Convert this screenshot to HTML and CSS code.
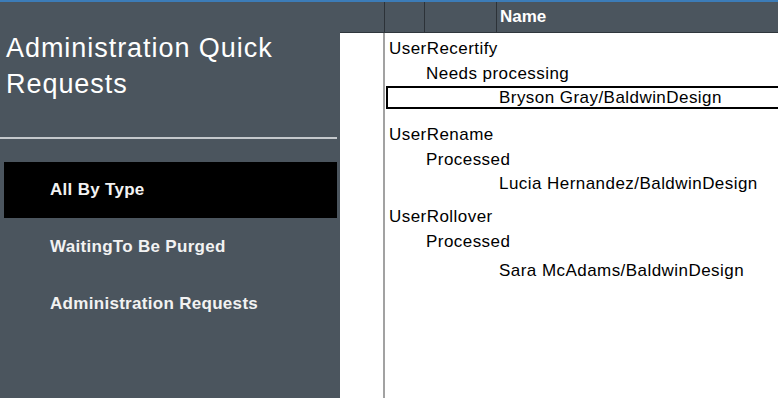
FILE: index.html
```html
<!DOCTYPE html>
<html lang="en">
<head>
<meta charset="utf-8">
<title>Administration Quick Requests</title>
<link rel="stylesheet" href="styles.css">
</head>
<body>
<div class="topbar"></div>
<div class="app">
  <aside class="sidebar">
    <h1 class="title">Administration Quick Requests</h1>
    <div class="divider"></div>
    <nav class="nav">
      <a class="nav-item active">All By Type</a>
      <a class="nav-item">WaitingTo Be Purged</a>
      <a class="nav-item">Administration Requests</a>
    </nav>
  </aside>
  <main class="main">
    <div class="header">
      <div class="hcell c1"></div>
      <div class="hcell c2"></div>
      <div class="hcell c3"></div>
      <div class="hcell name">Name</div>
    </div>
    <div class="body">
      <div class="gutter"></div>
      <div class="list">
        <div class="group g1">
          <div class="row l0">UserRecertify</div>
          <div class="row l1">Needs processing</div>
          <div class="row l2 selected">Bryson Gray/BaldwinDesign</div>
        </div>
        <div class="group g2">
          <div class="row l0">UserRename</div>
          <div class="row l1">Processed</div>
          <div class="row l2">Lucia Hernandez/BaldwinDesign</div>
        </div>
        <div class="group g3">
          <div class="row l0">UserRollover</div>
          <div class="row l1">Processed</div>
          <div class="row l2 late">Sara McAdams/BaldwinDesign</div>
        </div>
      </div>
    </div>
  </main>
</div>
</body>
</html>
```

FILE: styles.css
```css
* { box-sizing: border-box; }
html, body { margin: 0; padding: 0; }
body {
  width: 778px;
  height: 398px;
  overflow: hidden;
  background: #4b555e;
  font-family: "Liberation Sans", Arial, sans-serif;
}
.topbar {
  height: 2px;
  background: #3c7cb8;
}
.app {
  display: flex;
  height: 396px;
}
.sidebar {
  width: 340px;
  flex: none;
  background: #4b555e;
  display: flex;
  flex-direction: column;
}
.title {
  margin: 0;
  padding: 28px 0 0 6px;
  font-size: 27px;
  font-weight: normal;
  letter-spacing: 0.95px;
  line-height: 36px;
  color: #fff;
}
.divider {
  margin-top: 35px;
  width: 337px;
  height: 2px;
  background: #c4c8cc;
}
.nav {
  margin-top: 23px;
  display: flex;
  flex-direction: column;
  gap: 1px;
}
.nav-item {
  display: flex;
  align-items: center;
  height: 56px;
  margin-left: 4px;
  width: 333px;
  padding-left: 46px;
  font-size: 17px;
  font-weight: bold;
  color: #f2f2f2;
  letter-spacing: 0.3px;
}
.nav-item.active {
  background: #000;
}
.main {
  flex: 1;
  display: flex;
  flex-direction: column;
}
.header {
  display: flex;
  height: 31px;
  background: #4b555e;
  border-bottom: 1px solid #2f363c;
}
.hcell {
  height: 100%;
  border-right: 1px solid #2c3238;
}
.c1 { width: 45px; }
.c2 { width: 40px; }
.c3 { width: 72px; }
.name {
  flex: 1;
  border-right: none;
  padding-left: 3px;
  display: flex;
  align-items: center;
  font-size: 17px;
  font-weight: bold;
  color: #fff;
}
.body {
  flex: 1;
  display: flex;
  background: #fff;
}
.gutter {
  width: 43px;
  flex: none;
}
.list {
  flex: 1;
  border-left: 2px solid #a2a2a2;
  font-size: 17px;
  letter-spacing: 0.45px;
  color: #000;
  padding-top: 4px;
}
.group.g2 { margin-top: 14px; }
.group.g3 { margin-top: 9px; }
.row {
  height: 24px;
  line-height: 24px;
  white-space: nowrap;
}
.row.l0 { padding-left: 4px; height: 25px; }
.row.l1 { padding-left: 41px; }
.row.l2 { padding-left: 114px; }
.row.late { margin-top: 5px; }
.row.selected {
  margin-left: 1px;
  height: 23px;
  line-height: 19px;
  border: 2px solid #000;
  border-right: none;
  padding-left: 111px;
}
```
